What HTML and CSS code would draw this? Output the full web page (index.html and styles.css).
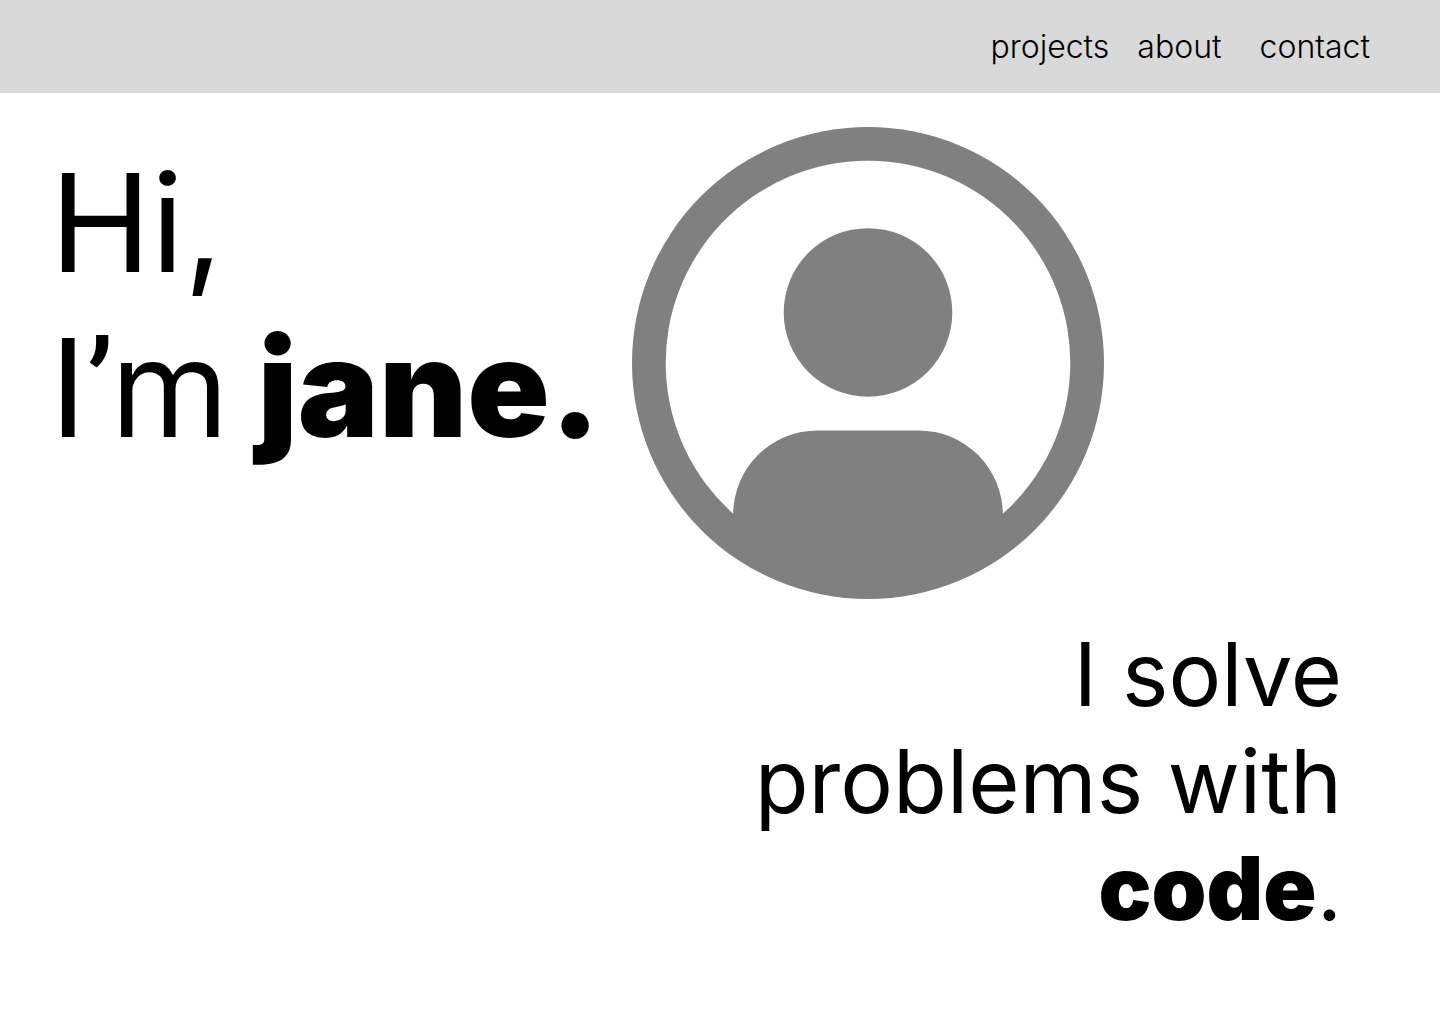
FILE: index.html
```html
<!DOCTYPE html>
<html lang="en">
<head>
<meta charset="utf-8">
<meta name="viewport" content="width=device-width, initial-scale=1">
<title>Jane</title>
<link rel="stylesheet" href="styles.css">
</head>
<body>
<header class="site-header">
  <nav class="nav">
    <a class="nav-link" href="#projects">projects</a>
    <a class="nav-link" href="#about">about</a>
    <a class="nav-link nav-link-last" href="#contact">contact</a>
  </nav>
</header>
<main class="main">
  <section class="hero">
    <h1 class="greeting">Hi,<br>I<span class="apostrophe">’</span><span class="tight">m </span><strong class="strong">jane.</strong></h1>
    <svg class="avatar" viewBox="0 0 28 28" role="img" aria-label="Portrait placeholder">
      <path fill="#808080" fill-rule="evenodd" d="M14 0A14 14 0 1 0 14 28A14 14 0 1 0 14 0ZM22 22.94V23A5 5 0 0 0 17 18H11A5 5 0 0 0 6 22.94A12 12 0 1 1 22 22.94Z"/>
      <circle cx="14" cy="11" r="5" fill="#808080"/>
    </svg>
  </section>
  <p class="tagline">I solve<br>problems with<br><strong class="strong">code</strong>.</p>
</main>
</body>
</html>
```
FILE: styles.css
```css
* {
  box-sizing: border-box;
}

body {
  margin: 0;
  background: #fff;
  color: #000;
  font-family: Inter, "Liberation Sans", sans-serif;
}

.site-header {
  background: #d9d9d9;
  padding: 27px 70px 27px 0;
}

.nav {
  display: flex;
  justify-content: flex-end;
  gap: 28px;
}

.nav-link {
  color: inherit;
  font-size: 32px;
  font-weight: 300;
  line-height: 39px;
  text-decoration: none;
}

.nav-link-last {
  margin-left: 10px;
}

.main {
  padding: 34px 98px 48px 50px;
}

.hero {
  display: flex;
  align-items: flex-start;
  gap: 31px;
}

.greeting {
  margin: 13px 0 0;
  font-size: 136px;
  font-weight: 400;
  line-height: 165px;
  white-space: nowrap;
}

.tight {
  font-family: "Inter Tight", Inter, sans-serif;
}

.apostrophe {
  font-family: Roboto, sans-serif;
}

.strong {
  font-weight: 900;
}

.avatar {
  flex: none;
  width: 472px;
  height: 472px;
}

.tagline {
  margin: 22px 0 0;
  font-size: 88px;
  font-weight: 400;
  line-height: 107px;
  text-align: right;
}
```
